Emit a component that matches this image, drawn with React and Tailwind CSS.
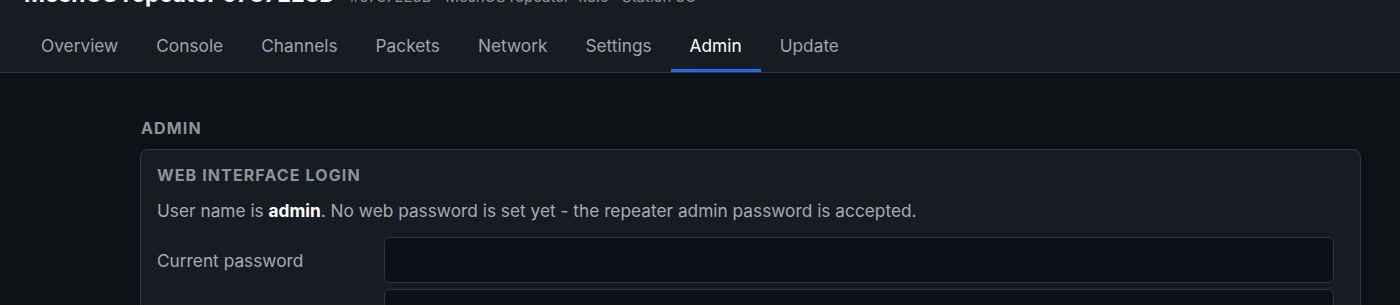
import React, { useState } from "react";

const tabs = ["Overview", "Console", "Channels", "Packets", "Network", "Settings", "Admin", "Update"];

const App = () => {
  const [active, setActive] = useState("Admin");
  const [current, setCurrent] = useState("");
  const [next, setNext] = useState("");

  return (
    <div
      className="min-h-screen bg-[#0e1116] text-[#c9d1d9]"
      style={{ fontFamily: "Inter, 'Noto Sans', sans-serif" }}
    >
      <div className="bg-[#171b22] border-b border-[#30363d]">
        <div className="flex items-baseline gap-[14px] pl-6 -mt-[20px] h-[28px]">
          <h1 className="text-[22.6px] font-bold text-white leading-[28px]">MeshOS repeater 6787EE3D</h1>
          <span className="text-[15px] text-[#8b949e]">#6787EE3D · MeshOS repeater 4.3.0 · Station 3C</span>
        </div>
        <div className="flex pl-[22px] mt-[15px]">
          {tabs.map((t) => (
            <button
              key={t}
              onClick={() => setActive(t)}
              className={
                "px-[19px] h-[49px] text-[17.3px] border-b-[3px] " +
                (active === t
                  ? "text-white border-[#1f6feb]"
                  : "text-[#9da5b1] border-transparent")
              }
            >
              {t}
            </button>
          ))}
        </div>
      </div>

      <div className="pl-[140px] pr-[39px] pt-[46px]">
        <p className="text-[16px] font-bold tracking-[0.07em] text-[#8b949e] leading-[18px] pl-[1px]">ADMIN</p>
        <div className="mt-[12px] rounded-lg border border-[#30363d] bg-[#171b22] px-4 pt-4 pb-4">
          <p className="text-[16px] font-bold tracking-[0.07em] text-[#8b949e] leading-[18px]">WEB INTERFACE LOGIN</p>
          <p className="mt-[16px] text-[17.3px] text-[#a3acb8] leading-[22px]">
            User name is <b className="text-white font-bold">admin</b>. No web password is set yet - the repeater admin password is accepted.
          </p>
          <div className="mt-[15px] flex items-center">
            <label className="w-[227px] text-[17.3px] text-[#a3acb8] pt-[2px]">Current password</label>
            <input
              type="password"
              value={current}
              onChange={(e) => setCurrent(e.target.value)}
              className="flex-1 mr-[10px] h-[46px] rounded-md border border-[#30363d] bg-[#0d1017] px-3 text-[17px] outline-none"
            />
          </div>
          <div className="mt-[6px] flex items-center">
            <label className="w-[227px] text-[17.3px] text-[#a3acb8] pt-[2px]">New password</label>
            <input
              type="password"
              value={next}
              onChange={(e) => setNext(e.target.value)}
              className="flex-1 mr-[10px] h-[46px] rounded-md border border-[#30363d] bg-[#0d1017] px-3 text-[17px] outline-none"
            />
          </div>
        </div>
      </div>
    </div>
  );
};

export default App;
